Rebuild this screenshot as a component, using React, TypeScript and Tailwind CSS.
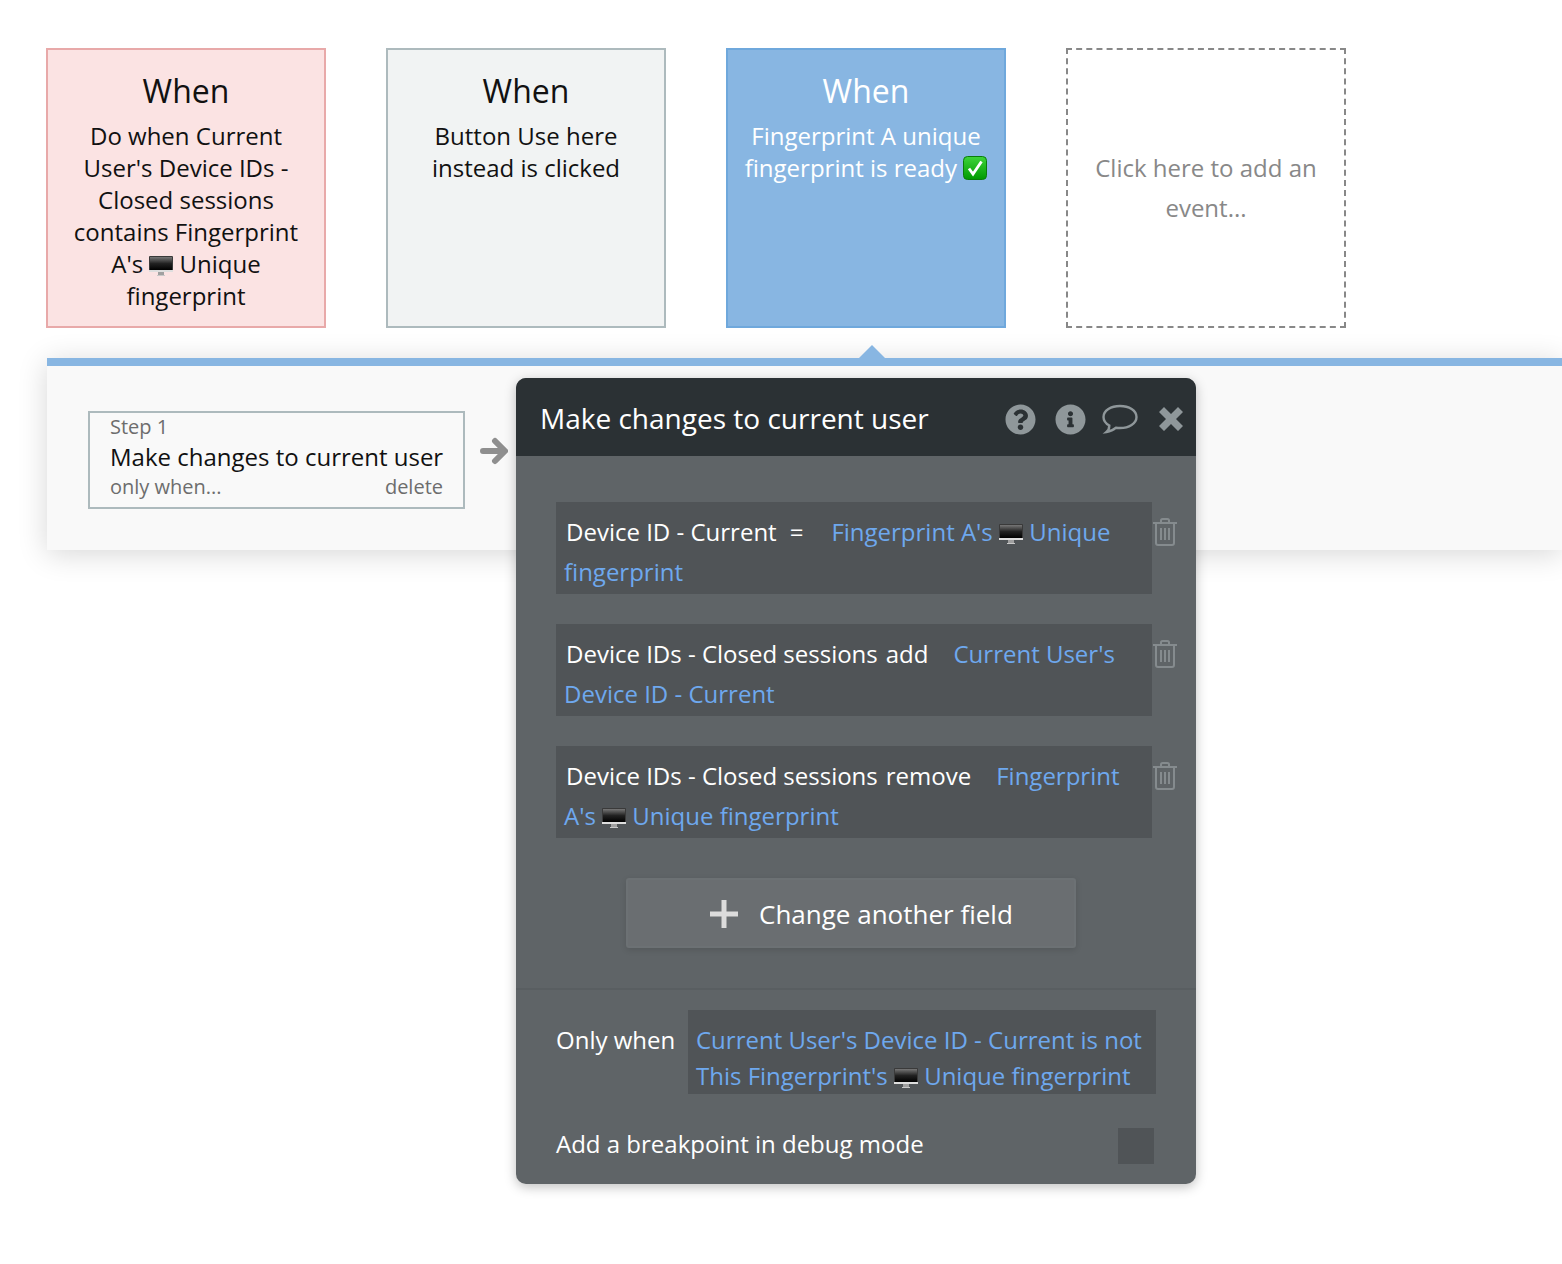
import { FaInfoCircle, FaQuestionCircle } from "react-icons/fa";

const Monitor = () => (
  <svg viewBox="0 0 24 20" className="inline-block h-[20px] w-[24px] align-[-3px]">
    <defs>
      <linearGradient id="screen" x1="0" y1="0" x2="0" y2="1">
        <stop offset="0" stopColor="#777" />
        <stop offset="0.5" stopColor="#222" />
        <stop offset="1" stopColor="#000" />
      </linearGradient>
    </defs>
    <rect x="0" y="0" width="24" height="16" rx="1" fill="#3a3a3a" />
    <rect x="1" y="1" width="22" height="13" fill="url(#screen)" />
    <rect x="0" y="14" width="24" height="2" fill="#dedede" />
    <rect x="9" y="16" width="6" height="3" fill="#a0a0a0" />
    <rect x="8" y="19" width="8" height="1" fill="#c8c8c8" />
  </svg>
);

const CheckEmoji = () => (
  <svg viewBox="0 0 24 24" className="inline-block h-[24px] w-[24px] align-[-3px]">
    <defs>
      <linearGradient id="check" x1="0" y1="0" x2="0" y2="1">
        <stop offset="0" stopColor="#3ed43a" />
        <stop offset="1" stopColor="#009a00" />
      </linearGradient>
    </defs>
    <rect x="0.5" y="0.5" width="23" height="23" rx="4" fill="url(#check)" stroke="#0a7d0a" />
    <path d="M6 12.500l4 5.500L18.500 5.500" fill="none" stroke="#fff" strokeWidth="2.8" />
  </svg>
);

const Trash = () => (
  <svg viewBox="0 0 26 28" className="h-[28px] w-[26px]" fill="none" stroke="#858b8e" strokeWidth="2">
    <path d="M1 5h24" />
    <path d="M9 5V2.500A1.500 1.500 0 0 1 10.500 1h5A1.500 1.500 0 0 1 17 2.500V5" />
    <path d="M4 5v20a2 2 0 0 0 2 2h14a2 2 0 0 0 2-2V5" />
    <path d="M9 10v12M13 10v12M17 10v12" />
  </svg>
);

const Bubble = () => (
  <svg viewBox="0 0 36 30" className="h-[30px] w-[36px]" fill="none" stroke="#8f979a" strokeWidth="2.4">
    <path d="M18 2C9 2 1.500 6.500 1.500 13c0 3.500 2.200 6.500 5.800 8.500 0 2.500-.8 4.800-2.800 6.500 3.500-.5 7-2 9.500-4.300 1.300.2 2.700.3 4 .3 9 0 16.500-4.500 16.500-11S27 2 18 2z" />
  </svg>
);

const Card = ({ className, children }: { className: string; children: React.ReactNode }) => (
  <div className={`h-[280px] w-[280px] border-2 px-[20px] pt-[19px] text-center ${className}`}>
    <div className="text-[32px] leading-[44px]">When</div>
    <div className="mt-[7px] text-[24px] leading-[32px]">{children}</div>
  </div>
);

const FieldRow = ({ children }: { children: React.ReactNode }) => (
  <div className="relative">
    <div className="h-[92px] w-[596px] bg-[#505457] px-[8px] pt-[10px] text-[24px] leading-[40px] text-white">
      {children}
    </div>
    <div className="absolute left-[596px] top-[16px]">
      <Trash />
    </div>
  </div>
);

const Dyn = ({ children }: { children: React.ReactNode }) => (
  <span className="text-[#6ea8ee]">{children}</span>
);

export default function App() {
  return (
    <div className="min-h-[1264px] w-full overflow-hidden bg-white pt-[48px] font-['Open_Sans',sans-serif] text-[#111]">
      {/* event cards */}
      <div className="flex gap-[60px] pl-[46px]">
        <Card className="border-[#e8a9a9] bg-[#fbe3e3]">
          Do when Current User's Device IDs - Closed sessions contains Fingerprint A's <Monitor /> Unique fingerprint
        </Card>
        <Card className="border-[#adbabd] bg-[#f1f3f3]">
          Button Use here
          <br />
          instead is clicked
        </Card>
        <Card className="border-[#6fa8dc] bg-[#88b6e2] !px-[10px] text-white">
          Fingerprint A unique fingerprint is ready <CheckEmoji />
        </Card>
        <div className="flex h-[280px] w-[280px] items-center justify-center border-2 border-dashed border-[#888] px-[20px] text-center text-[24px] leading-[40px] text-[#888]">
          Click here to add an event...
        </div>
      </div>

      {/* workflow panel */}
      <div className="relative ml-[47px] mt-[30px] h-[192px] border-t-[8px] border-[#88b6e2] bg-[#f9f9f9] shadow-[0_4px_28px_rgba(0,0,0,0.16)]">
        <div className="absolute left-[812px] top-[-21px] h-0 w-0 border-x-[13px] border-b-[13px] border-x-transparent border-b-[#88b6e2]" />
        <div className="flex items-center pl-[41px] pt-[45px]">
          <div className="h-[98px] w-[377px] border-2 border-[#adbabd] px-[20px] pt-[1px]">
            <div className="text-[20px] leading-[26px] text-[#6d6d6d]">Step 1</div>
            <div className="mt-[2px] whitespace-nowrap text-[24px] leading-[30px]">Make changes to current user</div>
            <div className="mt-[1px] flex justify-between text-[20px] leading-[28px] text-[#6d6d6d]">
              <span>only when...</span>
              <span>delete</span>
            </div>
          </div>
          <svg viewBox="0 0 28 28" className="mb-[18px] ml-[15px] h-[28px] w-[28px]" fill="none" stroke="#8f8f8f" strokeWidth="6" strokeLinecap="round" strokeLinejoin="round">
            <path d="M3 14h21M15 4l10 10-10 10" />
          </svg>
        </div>

        {/* action editor */}
        <div className="absolute left-[469px] top-[12px] h-[806px] w-[680px] overflow-hidden rounded-[10px] bg-[#5f6467] text-white shadow-[0_3px_12px_rgba(0,0,0,0.25)]">
          <div className="flex h-[78px] items-center justify-between bg-[#2b3134] pl-[24px] pr-[12px] pt-[2px]">
            <span className="text-[28px]">Make changes to current user</span>
            <div className="mt-[2px] flex items-center text-[#8f979a]">
              <FaQuestionCircle className="text-[31px]" />
              <FaInfoCircle className="ml-[19px] text-[31px]" />
              <div className="ml-[16px]">
                <Bubble />
              </div>
              <svg viewBox="0 0 26 26" className="ml-[20px] h-[26px] w-[26px]" fill="#8f979a">
                <path d="M6 1l7 7 7-7 5 5-7 7 7 7-5 5-7-7-7 7-5-5 7-7-7-7z" />
              </svg>
            </div>
          </div>

          <div className="flex flex-col gap-[30px] pl-[40px] pt-[46px]">
            <FieldRow>
              <span className="ml-[2px]">Device ID - Current</span>
              <span className="ml-[13px]">=</span>
              <span className="ml-[28px]" />
              <Dyn>
                Fingerprint A's <Monitor /> Unique fingerprint
              </Dyn>
            </FieldRow>
            <FieldRow>
              <span className="ml-[2px]">Device IDs - Closed sessions</span>
              <span className="ml-[8px]">add</span>
              <span className="ml-[25px]" />
              <Dyn>Current User's Device ID - Current</Dyn>
            </FieldRow>
            <FieldRow>
              <span className="ml-[2px]">Device IDs - Closed sessions</span>
              <span className="ml-[8px]">remove</span>
              <span className="ml-[25px]" />
              <Dyn>
                Fingerprint A's <Monitor /> Unique fingerprint
              </Dyn>
            </FieldRow>
          </div>

          <div className="ml-[110px] mt-[40px] flex h-[70px] w-[450px] items-center rounded-[3px] border-2 border-[#6c7174] bg-[#6a6e71] pl-[81px] pt-[2px] shadow-[0_2px_6px_rgba(0,0,0,0.12)]">
            <svg viewBox="0 0 30 30" className="h-[30px] w-[30px]" fill="#dcdcdc">
              <path d="M12.500 1h5v11.500H29v5H17.500V29h-5V17.500H1v-5h11.500z" />
            </svg>
            <span className="ml-[20px] text-[26px]">Change another field</span>
          </div>

          <div className="mt-[40px] border-t-2 border-[#595e61] pl-[40px] pr-[40px] pt-[20px]">
            <div className="flex">
              <span className="w-[132px] pt-[12px] text-[24px] leading-[36px]">Only when</span>
              <div className="h-[84px] w-[468px] bg-[#505457] px-[8px] pt-[12px] text-[24px] leading-[36px]">
                <Dyn>
                  Current User's Device ID - Current is not This Fingerprint's <Monitor /> Unique fingerprint
                </Dyn>
              </div>
            </div>
            <div className="mt-[34px] flex items-center justify-between pr-[2px]">
              <span className="mb-[4px] text-[24px] leading-[32px]">Add a breakpoint in debug mode</span>
              <div className="h-[36px] w-[36px] bg-[#505457]" />
            </div>
          </div>
        </div>
      </div>
    </div>
  );
}
